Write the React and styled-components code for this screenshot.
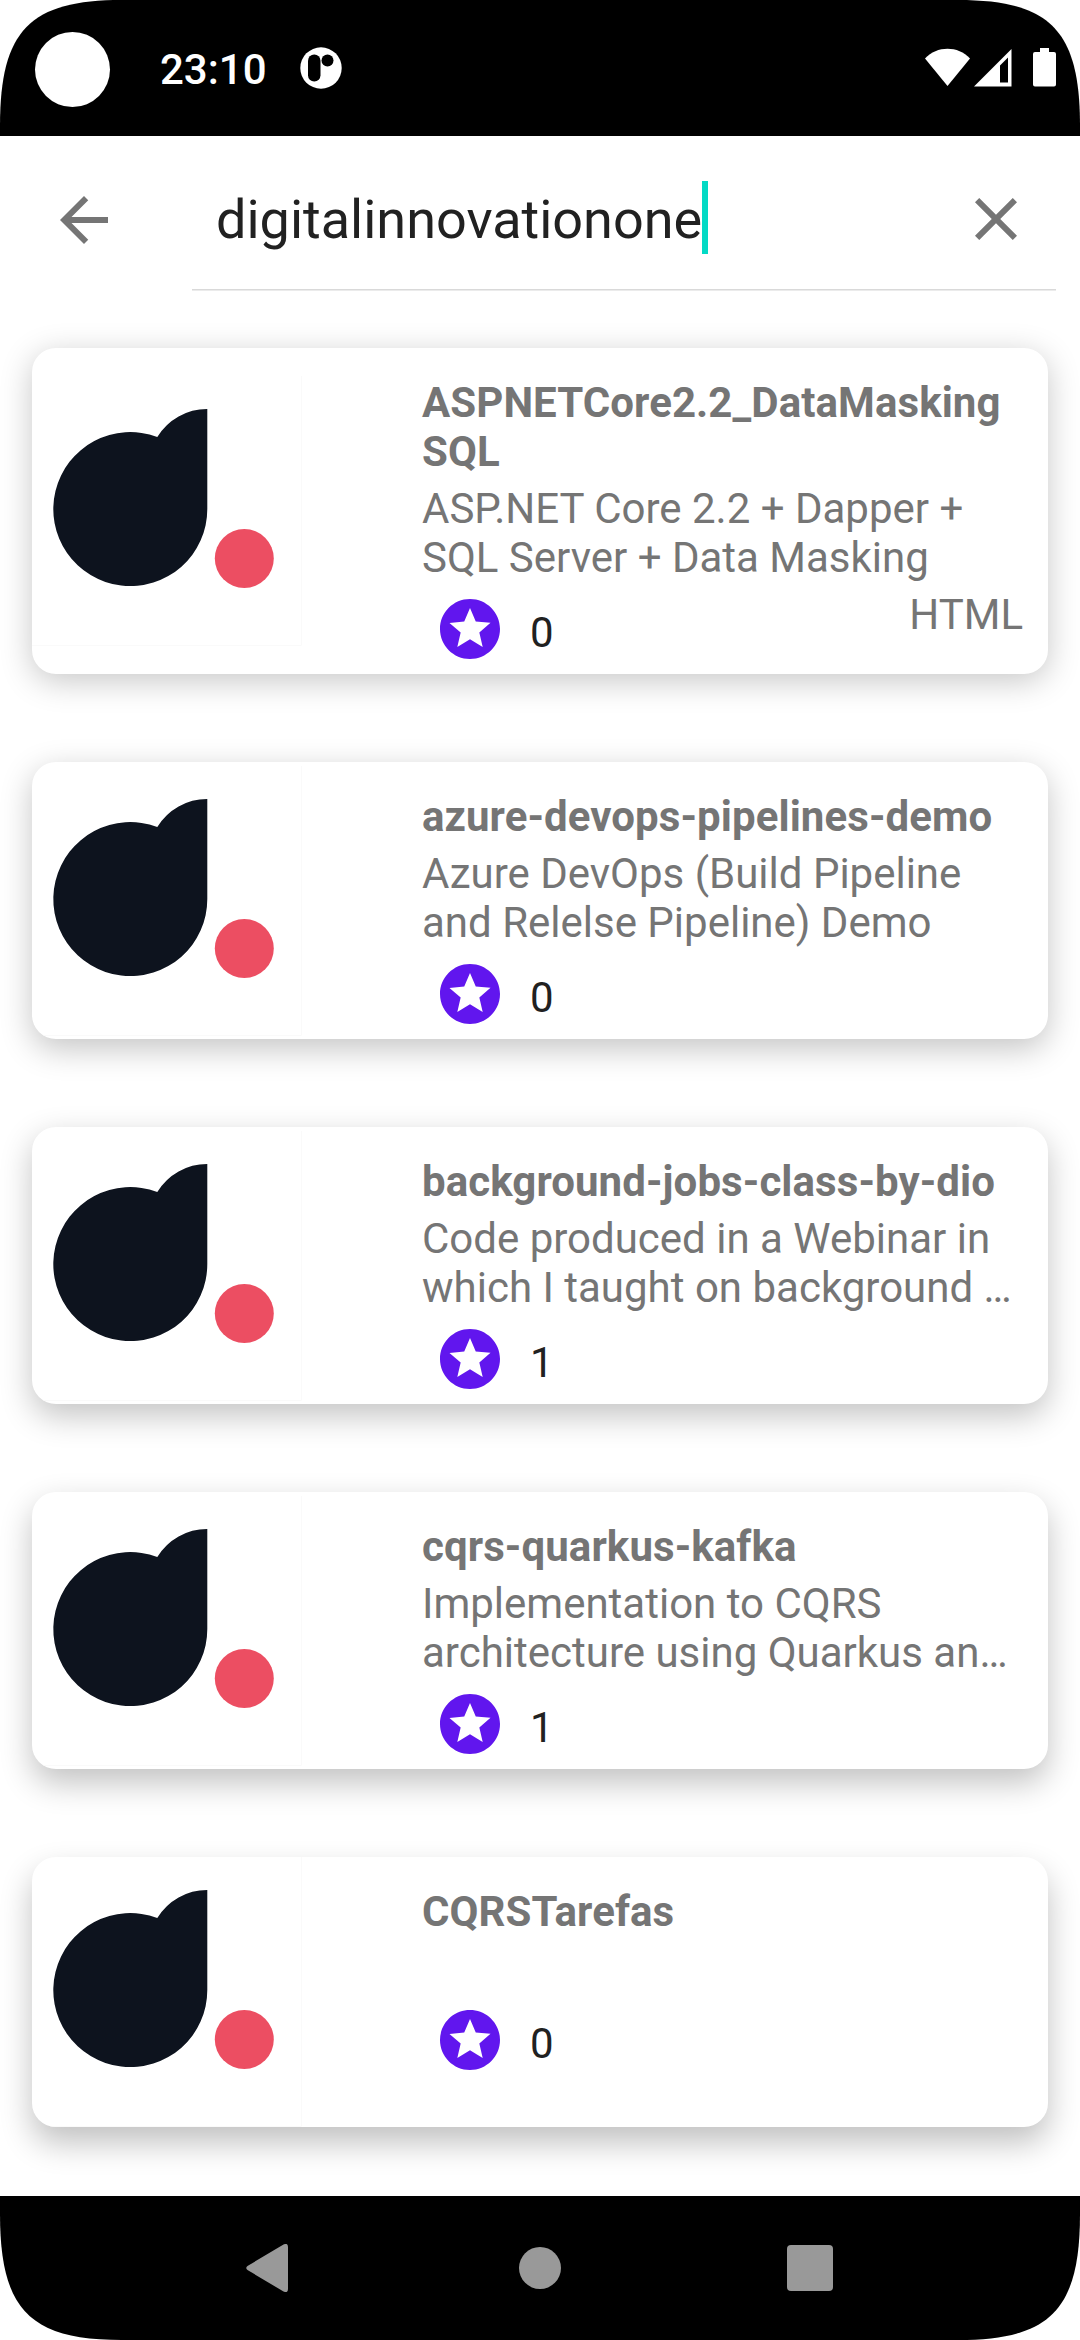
import React from "react";
import styled, { createGlobalStyle } from "styled-components";

const GlobalStyle = createGlobalStyle`
  *, *::before, *::after { box-sizing: border-box; }
  html, body { margin: 0; padding: 0; background: #fff; }
  body { font-family: Roboto, "Noto Sans", sans-serif; overflow: hidden; }
`;

const Screen = styled.div`
  width: 1080px;
  height: 2340px;
  display: flex;
  flex-direction: column;
  background: #fff;
  overflow: hidden;
`;

const StatusBar = styled.header`
  height: 136px;
  flex: none;
  display: flex;
  align-items: center;
  padding: 0 24px 0 35px;
  background: #000;
  color: #fff;
  clip-path: path("M0 136V126C0 30 30 0 122 0H958C1050 0 1080 30 1080 126V136Z");
`;

const Camera = styled.div`
  width: 75px;
  height: 75px;
  margin-top: 3px;
  border-radius: 50%;
  background: #fff;
`;

const Clock = styled.span`
  margin: 3px 0 0 50px;
  width: 105px;
  font-size: 42px;
  line-height: 50px;
  font-weight: 500;
  white-space: nowrap;
`;

const AppGlyph = styled.svg`
  margin-left: 35px;
`;

const StatusIcons = styled.svg`
  margin: 0 0 1px auto;
`;

const SearchBar = styled.div`
  height: 168px;
  flex: none;
  display: flex;
  align-items: center;
`;

const IconButton = styled.button`
  flex: none;
  width: ${(p) => p.$width}px;
  height: 120px;
  display: flex;
  align-items: center;
  justify-content: center;
  padding: 0;
  border: 0;
  background: none;
  color: #757575;
`;

const SearchField = styled.div`
  width: 864px;
  height: 154px;
  align-self: flex-start;
  margin-left: 24px;
  display: flex;
  align-items: center;
  padding: 13px 0 0 24px;
  border-bottom: 1px solid #d9d9d9;
  box-shadow: 0 1px 0 #ebebeb;
`;

const Query = styled.span`
  flex: none;
  margin-top: 2px;
  color: #212121;
  font-size: 54px;
  line-height: 64px;
  white-space: nowrap;
`;

const Caret = styled.span`
  flex: none;
  width: 6px;
  height: 73px;
  margin: 0 auto 3px 0;
  background: #03dac5;
`;

const RepoList = styled.main`
  flex: 1;
  min-height: 0;
  display: flex;
  flex-direction: column;
  gap: 88px;
  padding: 44px 32px 0;
  overflow: hidden;
`;

const Card = styled.article`
  flex: none;
  min-height: 270px;
  display: flex;
  align-items: center;
  border-radius: 24px;
  background: #fff;
  overflow: hidden;
  box-shadow: 0 ${(p) => p.$drop}px 32px rgba(0, 0, 0, ${(p) => p.$shade});
`;

const Avatar = styled.svg`
  flex: none;
`;

const Details = styled.div`
  flex: 1;
  align-self: stretch;
  display: flex;
  flex-direction: column;
  padding: 30px 25px 0 120px;
  color: #757575;
  font-size: 42px;
  line-height: 49px;
  white-space: pre;
`;

const Title = styled.h2`
  margin: 0;
  font-size: inherit;
  font-weight: 700;
  letter-spacing: 0.08px;
`;

const Description = styled.p`
  margin: 8px 0 0;
  min-height: 49px;
`;

const Footer = styled.div`
  display: flex;
  align-items: flex-start;
  justify-content: space-between;
  height: 92px;
  padding-left: 12px;
`;

const Stars = styled.div`
  display: flex;
  gap: 24px;
  padding-top: 11px;
  color: #212121;
`;

const StarCount = styled.span`
  margin-top: 15px;
`;

const Language = styled.span`
  margin-top: 8px;
`;

const NavBar = styled.nav`
  height: 144px;
  flex: none;
  display: flex;
  justify-content: center;
  background: #000;
  clip-path: path("M0 0H1080V18C1080 114 1050 144 958 144H122C30 144 0 114 0 18Z");
`;

const NavButton = styled.button`
  width: 270px;
  display: flex;
  align-items: center;
  justify-content: center;
  padding: 0;
  border: 0;
  background: none;
  color: #999;
`;

const repos = [
  { title: "ASPNETCore2.2_DataMasking\nSQL", description: "ASP.NET Core 2.2 + Dapper +\nSQL Server + Data Masking", stars: 0, language: "HTML" },
  { title: "azure-devops-pipelines-demo", description: "Azure DevOps (Build Pipeline\nand Relelse Pipeline) Demo", stars: 0 },
  { title: "background-jobs-class-by-dio", description: "Code produced in a Webinar in\nwhich I taught on background …", stars: 1 },
  { title: "cqrs-quarkus-kafka", description: "Implementation to CQRS\narchitecture using Quarkus an…", stars: 1 },
  { title: "CQRSTarefas", description: "", stars: 0 },
];

function OwnerLogo() {
  return (
    <Avatar width="270" height="270" viewBox="0 0 270 270">
      <path d="M0 269.5H269.5V0" fill="none" stroke="#fafafa" />
      <path d="M175.3 33A58.3 58.3 0 0 0 125.3 61A77 77 0 1 0 175.3 133Z" fill="#0d131e" />
      <circle cx="212.3" cy="182.5" r="29.5" fill="#ec4e62" />
    </Avatar>
  );
}

function StarBadge() {
  return (
    <svg width="72" height="72" viewBox="0 0 24 24">
      <path fill="#6116ee" d="M11.99 2C6.47 2 2 6.48 2 12s4.47 10 9.99 10C17.52 22 22 17.52 22 12S17.52 2 11.99 2zm4.24 16L12 15.45 7.77 18l1.12-4.81-3.73-3.23 4.92-.42L12 5l1.92 4.53 4.92.42-3.73 3.23L16.23 18z" />
    </svg>
  );
}

function RepoCard({ repo, index }) {
  // Cards further down the screen cast a longer, slightly darker shadow.
  return (
    <Card $drop={7 + index * 2.25} $shade={0.225 + index * 0.006}>
      <OwnerLogo />
      <Details>
        <Title>{repo.title}</Title>
        <Description>{repo.description}</Description>
        <Footer>
          <Stars>
            <StarBadge />
            <StarCount>{repo.stars}</StarCount>
          </Stars>
          {repo.language && <Language>{repo.language}</Language>}
        </Footer>
      </Details>
    </Card>
  );
}

export default function App() {
  return (
    <Screen>
      <GlobalStyle />
      <StatusBar>
        <Camera />
        <Clock>23:10</Clock>
        <AppGlyph width="42" height="42" viewBox="0 0 42 42">
          <circle cx="21" cy="21" r="20.7" fill="#fff" />
          <rect x="8" y="7.5" width="12.5" height="27" rx="6.2" fill="#000" />
          <circle cx="27.5" cy="13.5" r="6" fill="#000" />
        </AppGlyph>
        <StatusIcons width="131" height="39" viewBox="0 0 131 39">
          <path fill="#fff" d="M0 10.5C12-2.5 33-2.5 45 10.5L22.5 38Z" />
          <path fill="#fff" fillRule="evenodd" d="M49 38.5L86.5 1V38.5ZM75 17.5V34.5H83V9.5Z" />
          <path fill="#fff" d="M115 0H124V4H129Q131 4 131 6V36.5Q131 38.5 129 38.5H110Q108 38.5 108 36.5V6Q108 4 110 4H115Z" />
        </StatusIcons>
      </StatusBar>
      <SearchBar>
        <IconButton $width={168} aria-label="Back">
          <svg width="72" height="72" viewBox="0 0 24 24"><path fill="currentColor" d="M20 11H7.83l5.59-5.59L12 4l-8 8 8 8 1.41-1.41L7.83 13H20v-2z" /></svg>
        </IconButton>
        <SearchField>
          <Query>digitalinnovationone</Query>
          <Caret />
          <IconButton $width={120} aria-label="Clear">
            <svg width="72" height="72" viewBox="0 0 24 24"><path fill="currentColor" d="M19 6.41L17.59 5 12 10.59 6.41 5 5 6.41 10.59 12 5 17.59 6.41 19 12 13.41 17.59 19 19 17.59 13.41 12z" /></svg>
          </IconButton>
        </SearchField>
      </SearchBar>
      <RepoList>
        {repos.map((repo, i) => (
          <RepoCard key={repo.title} repo={repo} index={i} />
        ))}
      </RepoList>
      <NavBar>
        <NavButton aria-label="Back">
          <svg width="48" height="48" viewBox="0 0 48 48"><path d="M1.500 22Q-1 24 1.500 26L37.500 47.500Q42 49.500 42 45V3Q42 -1.500 37.500 0.500Z" fill="currentColor" /></svg>
        </NavButton>
        <NavButton aria-label="Home">
          <svg width="42" height="42" viewBox="0 0 42 42"><circle cx="21" cy="21" r="21" fill="currentColor" /></svg>
        </NavButton>
        <NavButton aria-label="Recents">
          <svg width="46" height="46" viewBox="0 0 46 46"><rect width="46" height="46" rx="4" fill="currentColor" /></svg>
        </NavButton>
      </NavBar>
    </Screen>
  );
}
